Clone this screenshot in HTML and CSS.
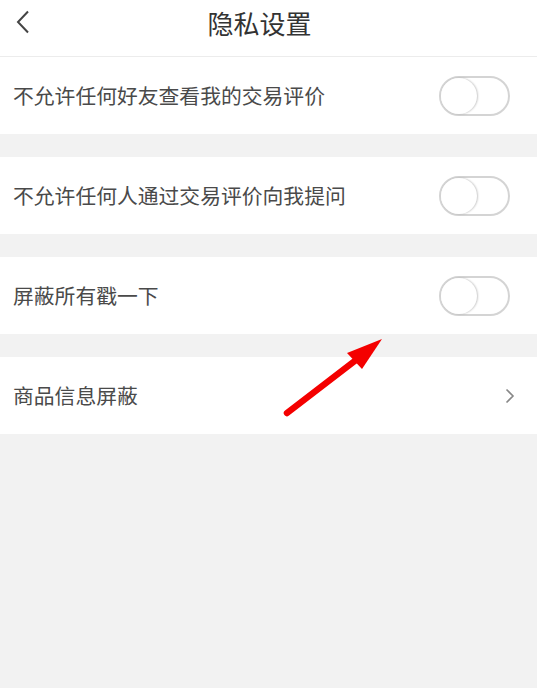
FILE: index.html
```html
<!DOCTYPE html>
<html lang="zh">
<head>
<meta charset="utf-8">
<link rel="stylesheet" href="styles.css">
</head>
<body>
<div class="page">
  <header class="nav">
    <svg class="back" width="14" height="24" viewBox="0 0 14 24"><path d="M12 1.5 L2 12 L12 22.5" fill="none" stroke="#444" stroke-width="2"/></svg>
    <h1 class="title">隐私设置</h1>
  </header>
  <div class="list">
    <div class="row"><span class="label">不允许任何好友查看我的交易评价</span><span class="switch"><span class="knob"></span></span></div>
    <div class="row"><span class="label">不允许任何人通过交易评价向我提问</span><span class="switch"><span class="knob"></span></span></div>
    <div class="row"><span class="label">屏蔽所有戳一下</span><span class="switch"><span class="knob"></span></span></div>
    <div class="row"><span class="label">商品信息屏蔽</span><svg class="chev" width="10" height="16" viewBox="0 0 10 16"><path d="M1.5 1.5 L8 8 L1.5 14.5" fill="none" stroke="#888" stroke-width="1.6"/></svg></div>
  </div>
  <svg class="arrow" width="537" height="688" viewBox="0 0 537 688">
    <line x1="287" y1="413" x2="356" y2="360" stroke="#f40000" stroke-width="6.5" stroke-linecap="round"/>
    <polygon points="382,339 347,353 362,369" fill="#f40000"/>
  </svg>
</div>
</body>
</html>
```
FILE: styles.css
```css
html, body { margin: 0; padding: 0; }
body {
  background: #f2f2f2;
  font-family: "Noto Sans CJK SC", "Noto Sans", sans-serif;
}
.page {
  position: relative;
  width: 537px;
  height: 688px;
  overflow: hidden;
  background: #f2f2f2;
}
.nav {
  height: 56px;
  background: #fff;
  border-bottom: 1px solid #ececec;
  display: flex;
  align-items: center;
  justify-content: center;
  position: relative;
}
.back {
  position: absolute;
  left: 16px;
  top: 10px;
}
.title {
  margin: -10px 18px 0 0;
  font-size: 26px;
  font-weight: 400;
  color: #333;
  line-height: 1;
}
.list {
  display: flex;
  flex-direction: column;
  gap: 23px;
}
.row {
  height: 77px;
  background: #fff;
  display: flex;
  align-items: center;
  justify-content: space-between;
  padding: 0 27px 0 13px;
}
.label {
  font-size: 20.8px;
  color: #4a4a4a;
  line-height: 1;
}
.switch {
  width: 67px;
  height: 36px;
  border: 2px solid #d4d4d4;
  border-radius: 20px;
  background: #fff;
  position: relative;
}
.knob {
  position: absolute;
  left: 0;
  top: 0;
  width: 36px;
  height: 36px;
  border-radius: 50%;
  background: #fff;
  box-shadow: 1px 0 2px rgba(0,0,0,0.22);
}
.chev {
  margin-right: -5px;
}
.arrow {
  position: absolute;
  left: 0;
  top: 0;
  pointer-events: none;
}
```
